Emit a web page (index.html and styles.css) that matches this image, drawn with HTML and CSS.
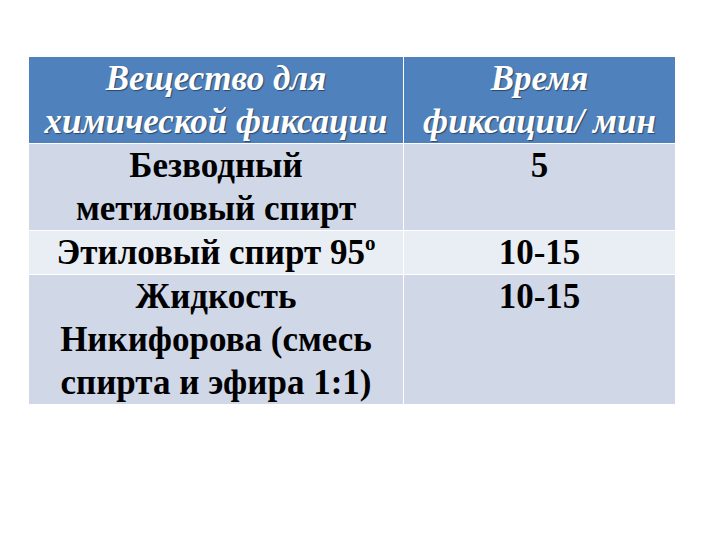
FILE: index.html
```html
<!DOCTYPE html>
<html>
<head>
<meta charset="utf-8">
<link rel="stylesheet" href="styles.css">
</head>
<body>
<div class="page">
<table class="tbl">
<tr class="head">
<th class="c1">Вещество для<br>химической фиксации</th>
<th class="c2">Время<br>фиксации/ мин</th>
</tr>
<tr class="odd">
<td>Безводный<br>метиловый спирт</td>
<td>5</td>
</tr>
<tr class="even">
<td>Этиловый спирт 95<sup>o</sup></td>
<td>10-15</td>
</tr>
<tr class="odd">
<td>Жидкость<br>Никифорова (смесь<br>спирта и эфира 1:1)</td>
<td>10-15</td>
</tr>
</table>
</div>
</body>
</html>
```
FILE: styles.css
```css
html, body { margin: 0; padding: 0; background: #fff; }
body { font-family: "Times New Roman", "Liberation Serif", serif; }
.page { width: 720px; height: 540px; padding: 57px 0 0 28px; box-sizing: border-box; }
.tbl {
  border-collapse: collapse;
  width: 648px;
  table-layout: fixed;
}
.tbl th, .tbl td {
  font-family: "Times New Roman", "Liberation Serif", serif;
  padding: 0;
  text-align: center;
  vertical-align: top;
  font-size: 35px;
  line-height: 43px;
  font-weight: bold;
  border-left: 1px solid #fff;
  border-right: 1px solid #fff;
  white-space: nowrap;
}
.c1 { width: 374px; }
.head th {
  background: #4f81bd;
  color: #fff;
  font-style: italic;
  text-shadow: 1px 1px 1px rgba(0,0,0,0.45);
  height: 85px;
}
.odd td, .even td { border-top: 1px solid #fff; color: #000; }
.odd td { background: #d0d8e8; }
.even td { background: #e9edf4; }
sup { font-size: 21px; line-height: 0; vertical-align: 14px; }
```
